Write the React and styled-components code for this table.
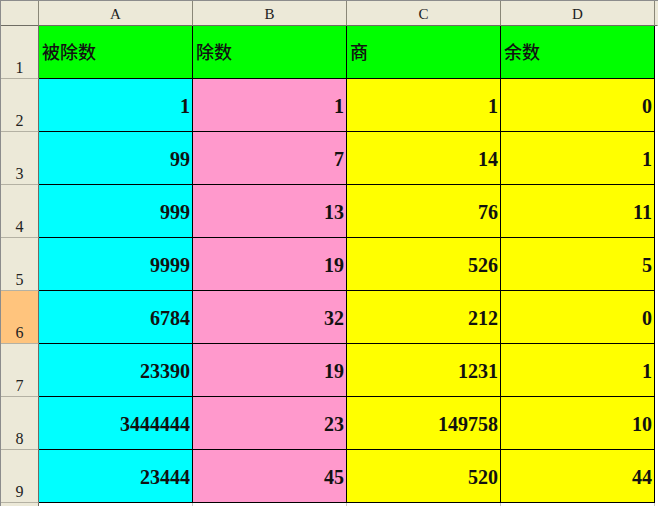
import React from 'react';
import styled, { createGlobalStyle } from 'styled-components';

const GlobalStyle = createGlobalStyle`
  html, body {
    margin: 0;
    padding: 0;
    background: #ffffff;
  }
`;

const rows = [
  ['1', '1', '1', '0'],
  ['99', '7', '14', '1'],
  ['999', '13', '76', '11'],
  ['9999', '19', '526', '5'],
  ['6784', '32', '212', '0'],
  ['23390', '19', '1231', '1'],
  ['3444444', '23', '149758', '10'],
  ['23444', '45', '520', '44'],
];

const colBg = ['#00ffff', '#ff99cc', '#ffff00', '#ffff00'];
const titles = ['被除数', '除数', '商', '余数'];
const letters = ['A', 'B', 'C', 'D'];

const App = () => {
  return (
    <>
      <GlobalStyle />
      <Sheet>
        <Corner />
        {letters.map((l) => (
          <ColHead key={l}>{l}</ColHead>
        ))}
        <ColHead $rest />

        <RowHead>1</RowHead>
        {titles.map((t) => (
          <TitleCell key={t}>{t}</TitleCell>
        ))}
        <Blank />

        {rows.map((r, i) => (
          <React.Fragment key={i}>
            <RowHead $active={i + 2 === 6}>{i + 2}</RowHead>
            {r.map((v, j) => (
              <NumCell key={j} $bg={colBg[j]}>
                {v}
              </NumCell>
            ))}
            <Blank />
          </React.Fragment>
        ))}

        <RowHead />
        {letters.map((l) => (
          <Blank key={l} $grid />
        ))}
        <Blank />
      </Sheet>
    </>
  );
};

const Sheet = styled.div`
  display: grid;
  grid-template-columns: 38px repeat(4, 154px) 1fr;
  grid-template-rows: 25px repeat(9, 53px) 20px;
  width: 658px;
  height: 506px;
  overflow: hidden;
  box-sizing: border-box;
  border-top: 1px solid #8c8c8c;
  border-left: 1px solid #8c8c8c;
`;

const Corner = styled.div`
  background: #ece9d8;
  border-right: 1px solid #8a8778;
  border-bottom: 1px solid #6f6d64;
`;

const ColHead = styled.div`
  display: flex;
  align-items: center;
  justify-content: center;
  background: #ece9d8;
  border-right: 1px solid ${(p) => (p.$rest ? '#ece9d8' : '#8a8778')};
  border-bottom: 1px solid #6f6d64;
  font-family: 'Liberation Serif', serif;
  font-size: 15px;
  color: #222;
  padding-top: 2px;
`;

const RowHead = styled.div`
  display: flex;
  align-items: flex-end;
  justify-content: center;
  background: ${(p) => (p.$active ? '#ffc47d' : '#ece9d8')};
  border-right: 1px solid #6f6d64;
  border-bottom: 1px solid #b4b1a3;
  font-family: 'Liberation Serif', serif;
  font-size: 16px;
  color: #222;
  padding-bottom: 1px;
  overflow: hidden;
`;

const TitleCell = styled.div`
  display: flex;
  align-items: center;
  background: #00ff00;
  border-right: 1px solid #000;
  border-bottom: 1px solid #000;
  padding-left: 3px;
  padding-bottom: 3px;
  font-family: 'Noto Sans CJK SC', sans-serif;
  font-weight: 500;
  font-size: 18px;
  color: #111;
`;

const NumCell = styled.div`
  display: flex;
  align-items: center;
  justify-content: flex-end;
  background: ${(p) => p.$bg};
  border-right: 1px solid #000;
  border-bottom: 1px solid #000;
  padding-right: 2px;
  padding-top: 2px;
  font-family: 'Liberation Serif', serif;
  font-weight: bold;
  font-size: 20px;
  color: #111;
`;

const Blank = styled.div`
  background: #ffffff;
  border-right: 1px solid ${(p) => (p.$grid ? '#c8c8c8' : 'transparent')};
`;

export default App;
